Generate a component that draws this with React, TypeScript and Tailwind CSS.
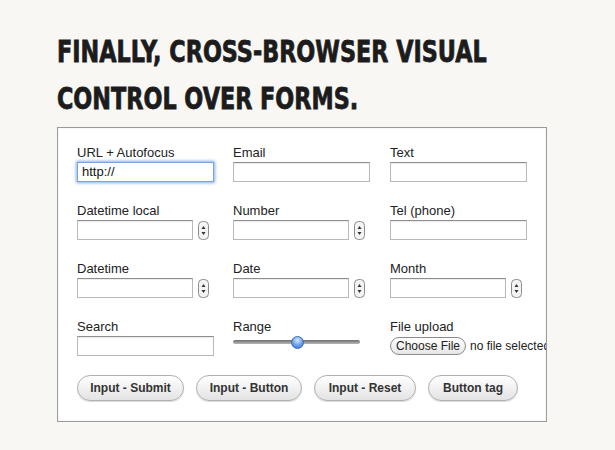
import React from 'react';

const Spinner = () => (
  <svg width="11" height="19" viewBox="0 0 11 19" className="shrink-0">
    <rect x="0.5" y="0.5" width="10" height="18" rx="4" fill="#f4f4f4" stroke="#8c8c8c" />
    <path d="M5.5 5 L7.5 8 L3.5 8 Z" fill="#333" />
    <path d="M5.5 14 L7.5 11 L3.5 11 Z" fill="#333" />
  </svg>
);

const inputCls =
  'h-[20px] bg-white border border-[#b9b9b9] border-t-[#8e8e8e] shadow-[inset_0_1px_1px_rgba(0,0,0,0.08)]';

const Field: React.FC<{ label: string; children: React.ReactNode }> = ({ label, children }) => (
  <div className="flex flex-col">
    <div className="h-[16px] leading-[16px] text-[13px] text-[#222] mb-[1px] whitespace-nowrap">{label}</div>
    <div className="h-[20px] flex items-center">{children}</div>
  </div>
);

const TextBox = () => <div className={`${inputCls} w-[137px]`} />;

const SpinBox = () => (
  <div className="flex items-center gap-[5px]">
    <div className={`${inputCls} w-[116px]`} />
    <Spinner />
  </div>
);

const PillButton: React.FC<{ children: React.ReactNode; w: string }> = ({ children, w }) => (
  <div
    className={`${w} h-[26px] rounded-full border border-[#b0b0b0] bg-gradient-to-b from-white to-[#e3e3e3] shadow-[0_1px_1px_rgba(0,0,0,0.15)] flex items-center justify-center text-[12px] font-bold text-[#333]`}
  >
    {children}
  </div>
);

const App: React.FC = () => {
  return (
    <div className="min-h-[450px] w-[615px] bg-[#f8f7f3] pt-[28px] pl-[57px]" style={{ fontFamily: '"Liberation Sans", Arial, sans-serif' }}>
      <h1
        className="text-[31px] leading-[47px] font-bold text-[#1c1c1c] uppercase origin-left scale-x-[0.8] whitespace-nowrap [-webkit-text-stroke:0.8px_#1c1c1c]"
        style={{ fontFamily: '"DejaVu Sans Condensed", "DejaVu Sans", sans-serif', fontStretch: 'condensed' }}
      >
        Finally, cross-browser visual
        <br />
        control over forms.
      </h1>

      <div className="mt-[5px] w-[490px] h-[295px] bg-white border border-[#9a9a9a] shadow-[inset_0_0_2px_rgba(0,0,0,0.1)] overflow-hidden pt-[17px] pl-[19px]">
        <div className="grid grid-cols-[156px_157px_157px] gap-y-[21px]">
          <Field label="URL + Autofocus">
            <div className="h-[20px] w-[137px] bg-white border border-[#7ba4dc] shadow-[0_0_3px_1px_rgba(80,140,230,0.7)] text-[13px] leading-[18px] pl-[4px] text-[#111]">
              http://
            </div>
          </Field>
          <Field label="Email">
            <TextBox />
          </Field>
          <Field label="Text">
            <TextBox />
          </Field>

          <Field label="Datetime local">
            <SpinBox />
          </Field>
          <Field label="Number">
            <SpinBox />
          </Field>
          <Field label="Tel (phone)">
            <TextBox />
          </Field>

          <Field label="Datetime">
            <SpinBox />
          </Field>
          <Field label="Date">
            <SpinBox />
          </Field>
          <Field label="Month">
            <SpinBox />
          </Field>

          <Field label="Search">
            <TextBox />
          </Field>
          <Field label="Range">
            <div className="relative w-[127px] h-[20px]">
              <div className="mt-[4px] w-full h-[4px] rounded-full bg-gradient-to-b from-[#6f6f6f] to-[#b8b8b8]" />
              <div className="absolute left-[58px] top-0 w-[13px] h-[13px] rounded-full border border-[#3b6cb8] bg-[radial-gradient(circle_at_50%_30%,#dbeaff_0%,#6ea4ec_50%,#2f6fd0_100%)]" />
            </div>
          </Field>
          <Field label="File upload">
            <div className="flex items-center whitespace-nowrap">
              <div className="h-[18px] w-[76px] rounded-full border border-[#8a8a8a] bg-gradient-to-b from-white to-[#e6e6e6] text-[12px] leading-[16px] text-center text-[#222]">
                Choose File
              </div>
              <span className="ml-[4px] text-[12px] text-[#222]">no file selected</span>
            </div>
          </Field>
        </div>

        <div className="flex gap-[12px] mt-[19px]">
          <PillButton w="w-[107px]">Input - Submit</PillButton>
          <PillButton w="w-[106px]">Input - Button</PillButton>
          <PillButton w="w-[102px]">Input - Reset</PillButton>
          <PillButton w="w-[90px]">Button tag</PillButton>
        </div>
      </div>
    </div>
  );
};

export default App;
